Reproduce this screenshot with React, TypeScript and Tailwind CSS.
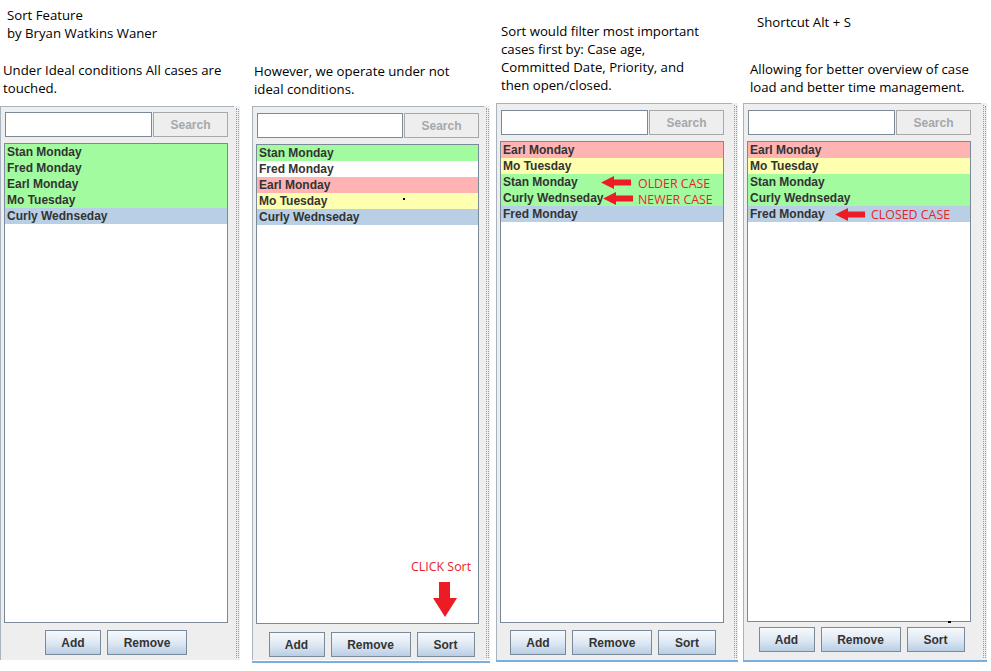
import React from 'react'

type Row = { name: string; bg: string }

const G = 'bg-[#a2fb9f]'
const W = 'bg-white'
const R = 'bg-[#ffb3b3]'
const Y = 'bg-[#ffffb0]'
const B = 'bg-[#b8cfe5]'

const text = "font-['Open_Sans',sans-serif] text-[13.2px] leading-[18px] text-black"

function Btn({ label, w }: { label: string; w: string }) {
  return (
    <div
      className={`${w} h-[25px] flex items-center justify-center border border-[#7a8a99] bg-linear-to-b from-[#f6f9fc] via-[#dfe9f4] to-[#b9cee4] text-[12px] font-bold text-[#333] font-['Liberation_Sans',Arial,sans-serif]`}
    >
      {label}
    </div>
  )
}

function Divider() {
  return (
    <div className="w-[6px] shrink-0 bg-[#eeeeee] flex justify-center gap-[1px] py-[2px]">
      <div className="border-l border-dotted border-[#8d9cab]" />
      <div className="border-l border-dotted border-[#8d9cab] mt-[1px]" />
    </div>
  )
}

function Panel({
  rows,
  sort,
  listW,
  padTop,
  listH,
  btnTop,
  btnPad = '',
  overlay,
}: {
  rows: Row[]
  sort: boolean
  listW: string
  padTop: string
  listH: string
  btnTop: string
  btnPad?: string
  overlay?: React.ReactNode
}) {
  return (
    <div className={`flex-1 h-full bg-[#eeeeee] border-l border-t border-[#a9b3bd] pl-[3px] ${padTop} flex flex-col`}>
      {/* search row */}
      <div className={`${listW} flex gap-[1px] pl-[1px] h-[25px]`}>
        <div className="flex-1 bg-white border border-[#7a8a99]" />
        <div className="w-[75px] flex items-center justify-center border border-[#a8a8a8] bg-[#eeeeee] text-[12px] font-bold text-[#a4a8ad] font-['Liberation_Sans',Arial,sans-serif]">
          Search
        </div>
      </div>

      {/* list */}
      <div className={`${listW} ${listH} mt-[6px] bg-white border border-[#7a8a99] relative font-['Liberation_Sans',Arial,sans-serif]`}>
        {rows.map((r) => (
          <div key={r.name} className={`${r.bg} h-[16px] pl-[2px] flex items-center text-[12px] font-bold text-[#333]`}>
            {r.name}
          </div>
        ))}
        {overlay}
      </div>

      {/* buttons */}
      <div className={`${listW} ${btnTop} ${btnPad} flex justify-center gap-[6px]`}>
        <Btn label="Add" w="w-[56px]" />
        <Btn label="Remove" w="w-[80px]" />
        {sort && <Btn label="Sort" w="w-[58px]" />}
      </div>
    </div>
  )
}

function LeftArrow({ className }: { className: string }) {
  return (
    <svg className={className} width="30" height="13" viewBox="0 0 30 13">
      <polygon points="0,6.5 13,0 13,3.5 30,3.5 30,9.5 13,9.5 13,13" fill="#ed1c24" />
    </svg>
  )
}

const redLabel = "absolute font-['Open_Sans',sans-serif] text-[12.4px] leading-[13px] text-[#e8232b] whitespace-nowrap"

export default function App() {
  return (
    <div className="w-[991px] h-[671px] bg-white flex overflow-hidden">
      {/* column 1 */}
      <div className="w-[240px] shrink-0 flex flex-col">
        <div className={`h-[106px] ${text}`}>
          <div className="pl-[7px] pt-[6px]">
            <p>Sort Feature</p>
            <p>by Bryan Watkins Waner</p>
          </div>
          <div className="pl-[3px] mt-[19px]">
            <p>Under Ideal conditions All cases are</p>
            <p>touched.</p>
          </div>
        </div>
        <div className="h-[554px] flex">
          <Panel
            listW="w-[224px]"
            padTop="pt-[5px]"
            listH="h-[480px]"
            btnTop="mt-[7px]"
            sort={false}
            rows={[
              { name: 'Stan Monday', bg: G },
              { name: 'Fred Monday', bg: G },
              { name: 'Earl Monday', bg: G },
              { name: 'Mo Tuesday', bg: G },
              { name: 'Curly Wednseday', bg: B },
            ]}
          />
          <Divider />
        </div>
      </div>

      {/* column 2 */}
      <div className="w-[238px] ml-[12px] shrink-0 flex flex-col">
        <div className={`h-[106px] ${text} pl-[2px] pt-[62px]`}>
          <p>However, we operate under not</p>
          <p>ideal conditions.</p>
        </div>
        <div className="h-[554px] flex">
          <Panel
            listW="w-[223px]"
            padTop="pt-[6px]"
            listH="h-[480px]"
            btnTop="mt-[8px]"
            btnPad="pl-[8px]"
            sort
            rows={[
              { name: 'Stan Monday', bg: G },
              { name: 'Fred Monday', bg: W },
              { name: 'Earl Monday', bg: R },
              { name: 'Mo Tuesday', bg: Y },
              { name: 'Curly Wednseday', bg: B },
            ]}
            overlay={
              <>
                <span className="absolute left-[146px] top-[53px] w-[2px] h-[2px] bg-black" />
                <span className={`${redLabel} left-[154px] top-[415px]`}>CLICK Sort</span>
                <svg className="absolute left-[176px] top-[437px]" width="24" height="35" viewBox="0 0 24 35">
                  <polygon points="6,0 17,0 17,16 24,16 12,35 0,16 6,16" fill="#ed1c24" />
                </svg>
              </>
            }
          />
          <Divider />
        </div>
        <div className="h-[2px] mt-[1px] bg-[#7aaede]" />
      </div>

      {/* column 3 */}
      <div className="w-[242px] ml-[6px] shrink-0 flex flex-col">
        <div className={`h-[103px] ${text} pl-[5px] pt-[22px]`}>
          <p>Sort would filter most important</p>
          <p>cases first by: Case age,</p>
          <p>Committed Date, Priority, and</p>
          <p>then open/closed.</p>
        </div>
        <div className="h-[557px] flex">
          <Panel
            listW="w-[224px]"
            padTop="pt-[6px]"
            listH="h-[482px]"
            btnTop="mt-[7px]"
            btnPad="pl-[2px]"
            sort
            rows={[
              { name: 'Earl Monday', bg: R },
              { name: 'Mo Tuesday', bg: Y },
              { name: 'Stan Monday', bg: G },
              { name: 'Curly Wednseday', bg: G },
              { name: 'Fred Monday', bg: B },
            ]}
            overlay={
              <>
                <LeftArrow className="absolute left-[100px] top-[34px]" />
                <span className={`${redLabel} left-[137px] top-[35px]`}>OLDER CASE</span>
                <LeftArrow className="absolute left-[102px] top-[50px]" />
                <span className={`${redLabel} left-[137px] top-[51px]`}>NEWER CASE</span>
              </>
            }
          />
          <Divider />
        </div>
        <div className="h-[2px] bg-[#7aaede]" />
      </div>

      {/* column 4 */}
      <div className="w-[244px] ml-[5px] shrink-0 flex flex-col">
        <div className={`h-[103px] ${text}`}>
          <p className="pl-[14px] pt-[13px]">Shortcut Alt + S</p>
          <div className="pl-[7px] mt-[29px]">
            <p>Allowing for better overview of case</p>
            <p>load and better time management.</p>
          </div>
        </div>
        <div className="h-[557px] flex">
          <Panel
            listW="w-[224px]"
            padTop="pt-[6px]"
            listH="h-[481px]"
            btnTop="mt-[5px]"
            btnPad="pl-[5px]"
            sort
            rows={[
              { name: 'Earl Monday', bg: R },
              { name: 'Mo Tuesday', bg: Y },
              { name: 'Stan Monday', bg: G },
              { name: 'Curly Wednseday', bg: G },
              { name: 'Fred Monday', bg: B },
            ]}
            overlay={
              <>
                <LeftArrow className="absolute left-[87px] top-[66px]" />
                <span className={`${redLabel} left-[123px] top-[66px]`}>CLOSED CASE</span>
                <span className="absolute left-[200px] bottom-[-2px] w-[3px] h-[2px] bg-black" />
              </>
            }
          />
          <Divider />
        </div>
        <div className="h-[2px] bg-[#7aaede]" />
      </div>
    </div>
  )
}
